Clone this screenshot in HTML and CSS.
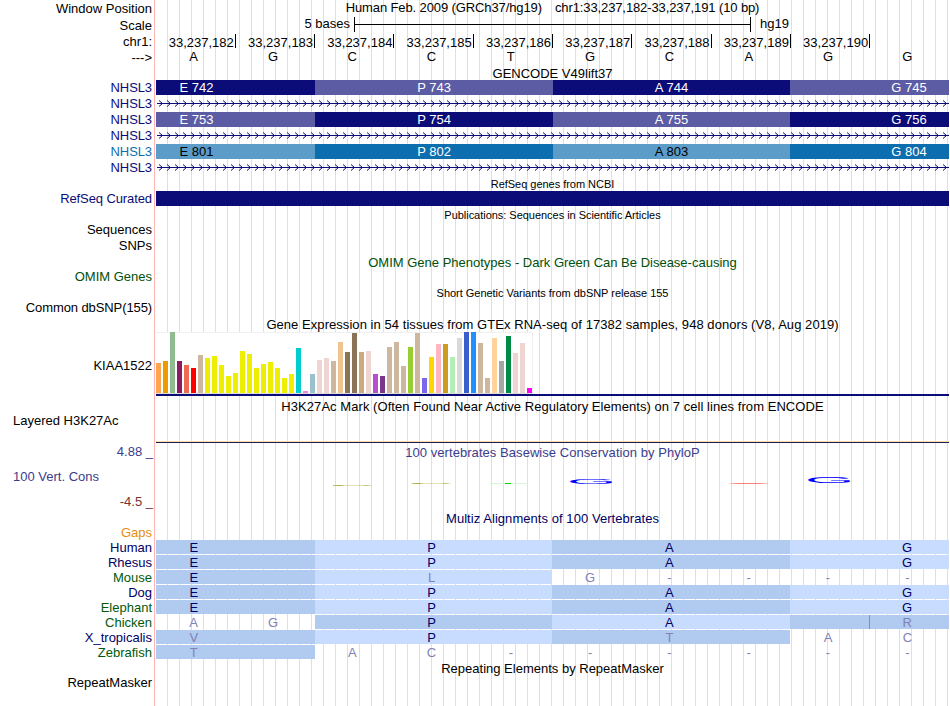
FILE: index.html
```html
<!DOCTYPE html>
<html lang="en">
<head>
    <meta charset="UTF-8">
    <title>Human chr1:33,237,182-33,237,191</title>
    <link rel="stylesheet" href="styles.css">
</head>
<body>
<div class="browser">
    <!-- ruler -->
    <div class="row">
        <p class="label low">Window Position</p>
        <p class="title pos"><span>Human Feb. 2009 (GRCh37/hg19)</span><span>chr1:33,237,182-33,237,191 (10 bp)</span></p>
    </div>
    <div class="row">
        <p class="label lower">Scale</p>
        <div class="track scale"><span class="size">5 bases</span><span class="ruler"></span><span>hg19</span></div>
    </div>
    <div class="row">
        <p class="label lower">chr1:</p>
        <div class="track bases ticks"><span>33,237,182</span><span>33,237,183</span><span>33,237,184</span><span>33,237,185</span><span>33,237,186</span><span>33,237,187</span><span>33,237,188</span><span>33,237,189</span><span>33,237,190</span></div>
    </div>
    <div class="row">
        <p class="label lower">---&gt;</p>
        <div class="track bases letters"><span>A</span><span>G</span><span>C</span><span>C</span><span>T</span><span>G</span><span>C</span><span>A</span><span>G</span><span>G</span></div>
    </div>

    <!-- gencode -->
    <p class="title head gencode">GENCODE V49lift37</p>
    <div class="row navy">
        <p class="label tight">NHSL3</p>
        <div class="track exon odd"><span>E 742</span><span>P 743</span><span>A 744</span><span>G 745</span></div>
    </div>
    <div class="row navy">
        <p class="label tight">NHSL3</p>
        <svg class="track intron" width="793" height="16">
            <defs>
                <pattern id="arrow" width="8" height="16" patternUnits="userSpaceOnUse">
                    <path d="M3 4.5L6.5 7.5L3 10.5" fill="none" stroke="#0c0c78"/>
                </pattern>
            </defs>
            <rect x="1" width="792" height="16" fill="url(#arrow)"/>
            <rect x="1" y="7" width="792" height="1" fill="#0c0c78"/>
        </svg>
    </div>
    <div class="row navy">
        <p class="label tight">NHSL3</p>
        <div class="track exon even"><span>E 753</span><span>P 754</span><span>A 755</span><span>G 756</span></div>
    </div>
    <div class="row navy">
        <p class="label tight">NHSL3</p>
        <svg class="track intron" width="793" height="16">
            <rect x="1" width="792" height="16" fill="url(#arrow)"/>
            <rect x="1" y="7" width="792" height="1" fill="#0c0c78"/>
        </svg>
    </div>
    <div class="row blue">
        <p class="label tight">NHSL3</p>
        <div class="track exon even"><span>E 801</span><span>P 802</span><span>A 803</span><span>G 804</span></div>
    </div>
    <div class="row navy">
        <p class="label tight">NHSL3</p>
        <svg class="track intron" width="793" height="16">
            <rect x="1" width="792" height="16" fill="url(#arrow)"/>
            <rect x="1" y="7" width="792" height="1" fill="#0c0c78"/>
        </svg>
    </div>

    <!-- refseq, publications, omim, dbsnp -->
    <p class="title head small">RefSeq genes from NCBI</p>
    <div class="row navy">
        <p class="label tight">RefSeq Curated</p>
        <div class="track solid"></div>
    </div>
    <p class="title head small">Publications: Sequences in Scientific Articles</p>
    <div class="row"><p class="label">Sequences</p></div>
    <div class="row"><p class="label">SNPs</p></div>
    <p class="title head green">OMIM Gene Phenotypes - Dark Green Can Be Disease-causing</p>
    <div class="row green"><p class="label">OMIM Genes</p></div>
    <p class="title head small">Short Genetic Variants from dbSNP release 155</p>
    <div class="row"><p class="label tight">Common dbSNP(155)</p></div>

    <!-- gtex -->
    <p class="title wide expr">Gene Expression in 54 tissues from GTEx RNA-seq of 17382 samples, 948 donors (V8, Aug 2019)</p>
    <div class="row gtex">
        <p class="label">KIAA1522</p>
        <div class="track gene"><div class="bars" id="bars"></div></div>
    </div>

    <!-- h3k27ac -->
    <p class="title wide mark">H3K27Ac Mark (Often Found Near Active Regulatory Elements) on 7 cell lines from ENCODE</p>
    <div class="row layered">
        <p class="label left">Layered H3K27Ac</p>
        <div class="track signal"></div>
    </div>

    <!-- conservation -->
    <div class="row cons">
        <div class="side">
            <p>4.88 _</p>
            <p class="name">100 Vert. Cons</p>
            <p class="min">-4.5 _</p>
        </div>
        <div class="track">
            <p class="cons-title wide">100 vertebrates Basewise Conservation by PhyloP</p>
            <svg class="logo" width="793" height="40">
                <defs>
                    <linearGradient id="c">
                        <stop offset="0" stop-color="#aaaa3c" stop-opacity=".7"/>
                        <stop offset=".18" stop-color="#aaaa3c"/>
                        <stop offset=".3" stop-color="#aaaa3c" stop-opacity=".35"/>
                        <stop offset=".75" stop-color="#aaaa3c" stop-opacity=".35"/>
                        <stop offset=".85" stop-color="#aaaa3c" stop-opacity=".8"/>
                        <stop offset="1" stop-color="#aaaa3c" stop-opacity=".1"/>
                    </linearGradient>
                    <linearGradient id="a">
                        <stop offset="0" stop-color="#f55" stop-opacity=".2"/>
                        <stop offset=".2" stop-color="#f55" stop-opacity=".75"/>
                        <stop offset=".8" stop-color="#f55" stop-opacity=".75"/>
                        <stop offset="1" stop-color="#f55" stop-opacity=".2"/>
                    </linearGradient>
                </defs>
                <rect x="177" y="24" width="39" height="1" fill="url(#c)"/>
                <rect x="256" y="22" width="39" height="1" fill="url(#c)"/>
                <rect x="334" y="22" width="38" height="1" fill="#d8f5d8"/>
                <rect x="349" y="22" width="6" height="1" fill="#00dc00"/>
                <rect x="573" y="22" width="39" height="1" fill="url(#a)"/>
                <text transform="translate(411 23) scale(6.35 .66)">G</text>
                <text transform="translate(649 22) scale(6.35 .92)">G</text>
            </svg>
        </div>
    </div>

    <!-- multiz -->
    <p class="title wide multiz">Multiz Alignments of 100 Vertebrates</p>
    <div class="row gaps"><p class="label">Gaps</p></div>
    <div class="row aln">
        <p class="label">Human</p>
        <div class="track bases"><b class="dk w2">E</b><b class="lt w3">P</b><b class="dk w3">A</b><b class="lt w2 end">G</b></div>
    </div>
    <div class="row aln">
        <p class="label">Rhesus</p>
        <div class="track bases"><b class="dk w2">E</b><b class="lt w3">P</b><b class="dk w3">A</b><b class="lt w2 end">G</b></div>
    </div>
    <div class="row aln">
        <p class="label alt">Mouse</p>
        <div class="track bases"><b class="dk w2">E</b><b class="lt w3 diff">L</b><i>G</i><i>-</i><i>-</i><i>-</i><i>-</i></div>
    </div>
    <div class="row aln">
        <p class="label">Dog</p>
        <div class="track bases"><b class="dk w2">E</b><b class="lt w3">P</b><b class="dk w3">A</b><b class="lt w2 end">G</b></div>
    </div>
    <div class="row aln">
        <p class="label alt">Elephant</p>
        <div class="track bases"><b class="dk w2">E</b><b class="lt w3">P</b><b class="dk w3">A</b><b class="lt w2 end">G</b></div>
    </div>
    <div class="row aln">
        <p class="label alt">Chicken</p>
        <div class="track bases"><i>A</i><i>G</i><b class="dk w3">P</b><b class="lt w3">A</b><b class="dk w2 end diff insert">R</b></div>
    </div>
    <div class="row aln">
        <p class="label">X_tropicalis</p>
        <div class="track bases"><b class="dk w2 diff">V</b><b class="lt w3">P</b><b class="dk w3 diff">T</b><i>A</i><i>C</i></div>
    </div>
    <div class="row aln">
        <p class="label alt">Zebrafish</p>
        <div class="track bases"><b class="dk w2 diff">T</b><i>A</i><i>C</i><i>-</i><i>-</i><i>-</i><i>-</i><i>-</i><i>-</i></div>
    </div>

    <!-- repeatmasker -->
    <p class="title repeat">Repeating Elements by RepeatMasker</p>
    <div class="row"><p class="label">RepeatMasker</p></div>
</div>
<script src="script.js"></script>
</body>
</html>
```
FILE: styles.css
```css
*{
    margin: 0;
    padding: 0;
}
body{
    background: #fff;
    font: 13px/16px "Liberation Sans", Arial, sans-serif;
    color: #000;
    overflow: hidden;
}
.browser{
    width: 949px;
    height: 706px;
    /* pink edge of the label column, then a guide line every 12px */
    background:
        linear-gradient(#ffb4b4, #ffb4b4) 154px 0 / 1px 100% no-repeat,
        linear-gradient(90deg, #fff 156px, transparent 156px),
        repeating-linear-gradient(90deg, transparent 0 11px, #dcdcf5 11px 12px);
}
.row{
    display: flex;
    height: 16px;
}
.label{
    width: 152px;
    margin-right: 4px;
    text-align: right;
    white-space: nowrap;
    flex-shrink: 0;
}
.label.low{
    line-height: 18px;
}
.label.lower{
    line-height: 20px;
}
.label.left{
    text-align: left;
    text-indent: 13px;
}
.tight{
    letter-spacing: -.1px;
}
.wide{
    letter-spacing: .055px;
}
.track{
    width: 793px;
    flex-shrink: 0;
}
.title{
    width: 793px;
    height: 16px;
    margin-left: 156px;
    text-align: center;
    white-space: nowrap;
}
.row .title{
    margin-left: 0;
}
.pos{
    line-height: 15px;
    letter-spacing: -.11px;
}
.pos span + span{
    margin-left: 13px;
}
.head{
    height: 15px;
    line-height: 17px;
}
.gencode{
    height: 16px;
    line-height: 19px;
}
.small{
    font-size: 11px;
    letter-spacing: -.03px;
}

/* ruler */
.scale{
    display: flex;
}
.size{
    width: 194px;
    text-align: right;
}
.ruler{
    width: 395px;
    height: 15px;
    margin: 1px 9px 0 4px;
    border: solid #000;
    border-width: 0 1px;
    background: linear-gradient(#000, #000) 0 7px / 100% 1px no-repeat;
}
.bases{
    display: grid;
    grid-template-columns: repeat(10, 79.3px);
}
.ticks{
    padding-left: .5px;
}
.ticks span{
    height: 14px;
    line-height: 17px;
    margin-top: 2px;
    padding-right: 1px;
    border-right: 1px solid #000;
    text-align: right;
}
.letters span{
    padding-right: 4px;
    text-align: center;
    line-height: 17px;
}

/* genes */
.navy{
    color: #0c0c78;
    --full: #0c0c78;
    --half: #5c5ca4;
}
.blue{
    color: #0c6eae;
    --full: #0c6eae;
    --half: #5c9cc8;
}
.exon{
    display: grid;
    grid-template: 15px / 159px 238px 237px 159px;
    height: 15px;
    color: #fff;
    text-align: center;
}
.exon span:first-child{
    padding-right: 78px;
}
.exon span:last-child{
    padding-left: 79px;
}
.odd span:nth-child(odd), .even span:nth-child(even){
    background: var(--full);
}
.odd span:nth-child(even), .even span:nth-child(odd){
    background: var(--half);
}
.blue .exon span:nth-child(odd){
    color: #000;
}
.solid{
    height: 15px;
    background: #0c0c78;
}
.green{
    color: #00500a;
}

/* expression */
.expr{
    line-height: 18px;
}
.gtex{
    height: 66px;
}
.gtex .label{
    line-height: 68px;
}
.gene{
    height: 62px;
    border-bottom: 2px solid #0c0c78;
}
.bars{
    display: flex;
    align-items: flex-end;
    gap: 2px;
    width: 377px;
    height: 61px;
    border-bottom: 1px solid #dcdcdc;
    background: linear-gradient(#f0f0f0, #f0f0f0) 0 0 / 100% 1px no-repeat, #fff;
    box-shadow: inset -1px 0 #f0f0f0;
}
.bars span{
    width: 5px;
}

.mark{
    height: 15px;
    line-height: 18px;
}
.layered{
    height: 31px;
}
.signal{
    height: 29px;
    border-bottom: 1px solid #1e1e5a;
    box-shadow: inset 0 -1px #ffdc9b;
}

/* conservation */
.cons{
    height: 67px;
    color: #3c3c8c;
}
.side{
    display: flex;
    flex-direction: column;
    gap: 9px;
    width: 153px;
    margin-right: 3px;
    text-align: right;
}
.side .name{
    text-align: left;
    text-indent: 13px;
}
.side .min{
    color: #783232;
}
.cons-title{
    padding-top: 1px;
    text-align: center;
}
.logo{
    display: block;
}
.logo text{
    font: 10px "Liberation Sans", Arial, sans-serif;
    fill: #00f;
}

/* alignment */
.multiz{
    color: #000064;
    height: 14px;
}
.gaps{
    height: 15px;
    color: #e68c0f;
}
.aln{
    height: 15px;
    color: #000064;
}
.aln .label, .gaps .label{
    line-height: 15px;
}
.aln .bases{
    height: 14px;
    grid-template-rows: 14px;
    line-height: 15px;
    text-align: center;
}
.aln b, .aln i{
    font-weight: normal;
    font-style: normal;
    box-sizing: border-box;
    padding-right: 4px;
}
.aln i, .aln .diff{
    color: #8282b4;
}
.alt{
    color: #005a0a;
}
.dk{
    background: #b0caf0;
}
.lt{
    background: #c8dcff;
}
.w2{
    grid-column: span 2;
}
.w3{
    grid-column: span 3;
}
.aln .w2{
    padding-right: 83px;
}
.aln .end{
    padding: 0 4px 0 79px;
}
.insert{
    background: linear-gradient(#d28228, #d28228) 79px 0 / 1px 100% no-repeat, #b0caf0;
}
.repeat{
    line-height: 17px;
    height: 15px;
}
```
FILE: script.js
```javascript
// one [height, color] per GTEx tissue
var tissues = [
    [30, "#ffa54f"], [32, "#ee9a00"], [61, "#8fbc8f"], [32, "#8b1c62"], [28, "#ee6a50"], [25, "#ff0000"],
    [38, "#cdb79e"], [35, "#eeee00"], [37, "#eeee00"], [28, "#eeee00"], [17, "#eeee00"], [20, "#eeee00"],
    [42, "#eeee00"], [39, "#eeee00"], [25, "#eeee00"], [29, "#eeee00"], [31, "#eeee00"], [25, "#eeee00"],
    [15, "#eeee00"], [19, "#eeee00"], [45, "#00cdcd"], [2, "#ee82ee"], [19, "#9ac0cd"], [33, "#eed5d2"],
    [35, "#eed5d2"], [32, "#cdb79e"], [51, "#eec591"], [41, "#8b7355"], [60, "#8b7355"], [41, "#cdaa7d"],
    [42, "#eed5d2"], [19, "#b452cd"], [17, "#7a378b"], [46, "#cdb79e"], [51, "#cdb79e"], [27, "#cdb79e"],
    [46, "#9acd32"], [60, "#cdb79e"], [15, "#7a67ee"], [36, "#ffd700"], [49, "#ffb6c1"], [49, "#cd9b1d"],
    [36, "#b4eeb4"], [55, "#d9d9d9"], [61, "#3a5fcd"], [61, "#1e90ff"], [50, "#cdb79e"], [15, "#cdb79e"],
    [55, "#ffd39b"], [32, "#a6a6a6"], [57, "#008b45"], [40, "#eed5d2"], [50, "#eed5d2"], [5, "#ff00ff"]
];
var oBars = document.querySelector("#bars");
tissues.forEach(function (tissue) {
    var oBar = document.createElement("span");
    oBar.style.height = tissue[0] + "px";
    oBar.style.background = tissue[1];
    oBars.appendChild(oBar);
});
```
